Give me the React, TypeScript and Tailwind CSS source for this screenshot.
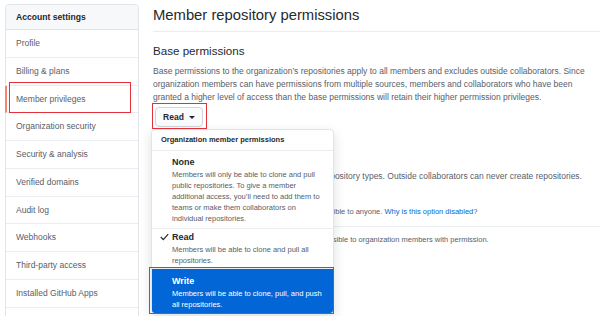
import React from "react";

const items = [
  "Profile",
  "Billing & plans",
  "Member privileges",
  "Organization security",
  "Security & analysis",
  "Verified domains",
  "Audit log",
  "Webhooks",
  "Third-party access",
  "Installed GitHub Apps",
  "",
];

export default function App() {
  const font = { fontFamily: '"Liberation Sans", Arial, sans-serif' };
  return (
    <div
      className="relative w-[600px] h-[316px] overflow-hidden bg-white flex text-[#24292e]"
      style={font}
    >
      {/* Sidebar */}
      <div className="ml-[5px] mt-[4px] w-[134px] shrink-0 self-start border border-[#e1e4e8] rounded-[4px] bg-white">
        <div className="h-[25px] flex items-center pl-[10px] text-[8.6px] font-bold bg-[#f6f8fa] border-b border-[#e1e4e8] rounded-t-[4px]">
          Account settings
        </div>
        {items.map((it, i) => (
          <div
            key={i}
            className={
              "h-[27.75px] flex items-center text-[8.5px] text-[#586069] border-b border-[#eaecef] " +
              (it === "Member privileges"
                ? "border-l-2 border-l-[#f9826c] -ml-px pl-[9px]"
                : "pl-[10px]")
            }
          >
            {it}
          </div>
        ))}
      </div>

      {/* Main */}
      <div className="ml-[14px] flex-1 pt-[5px]">
        <div className="text-[14.8px] leading-[20px] font-normal border-b border-[#eaecef] pb-[6px] whitespace-nowrap">
          Member repository permissions
        </div>
        <div className="text-[11.6px] leading-[16px] mt-[11px]">Base permissions</div>
        <p className="text-[8.5px] leading-[13px] text-[#586069] mt-[5.5px] whitespace-nowrap">
          Base permissions to the organization’s repositories apply to all members and excludes outside collaborators. Since
          <br />
          organization members can have permissions from multiple sources, members and collaborators who have been
          <br />
          granted a higher level of access than the base permissions will retain their higher permission privileges.
        </p>
        <div className="mt-[3.5px] flex">
          <div className="h-[20px] w-[48px] ml-[2px] flex items-center justify-center gap-[5px] text-[8.5px] font-bold bg-[#fafbfc] border border-[#d1d5da] rounded-[4px]">
            Read
            <span className="w-0 h-0 border-l-[3px] border-r-[3px] border-t-[3px] border-l-transparent border-r-transparent border-t-[#24292e]" />
          </div>
        </div>
        <div className="text-[11.6px] leading-[16px] mt-[20px]">Repository creation</div>
        <p className="text-[8.5px] leading-[13px] text-[#586069] mt-[6.5px] whitespace-nowrap">
          Members will be able to create only selected repository types. Outside collaborators can never create repositories.
        </p>
        <div className="mt-[23px] pl-[3px] text-[7.5px] text-[#586069] leading-[11px] whitespace-nowrap">
          Members will be able to create public repositories, visible to anyone.{" "}
          <span className="text-[#0366d6]">Why is this option disabled?</span>
        </div>
        <div className="mt-[9.5px] border-t border-[#eaecef]" />
        <div className="mt-[7px] pl-[3px] text-[7.5px] text-[#586069] leading-[11px] whitespace-nowrap">
          Members will be able to create private repositories, visible to organization members with permission.
        </div>
      </div>

      {/* Dropdown */}
      <div className="absolute left-[151px] top-[129px] w-[183px] h-[185px] bg-white border border-[#e1e4e8] rounded-[4px] shadow-[0_4px_12px_rgba(27,31,35,0.15)] overflow-hidden">
        <div className="h-[21px] flex items-center pl-[9px] text-[7.5px] font-bold border-b border-[#eaecef] whitespace-nowrap">
          Organization member permissions
        </div>
        <div className="pl-[20px] pr-[6px] pt-[5px] pb-[4px] border-b border-[#eaecef]">
          <div className="text-[9px] font-bold leading-[12px]">None</div>
          <div className="text-[7.5px] leading-[11px] text-[#586069] mt-[1px] whitespace-nowrap">
            Members will only be able to clone and pull
            <br />
            public repositories. To give a member
            <br />
            additional access, you’ll need to add them to
            <br />
            teams or make them collaborators on
            <br />
            individual repositories.
          </div>
        </div>
        <div className="relative pl-[20px] pr-[6px] pt-[2px] pb-[2px] border-b border-[#eaecef]">
          <svg className="absolute left-[8px] top-[4px]" width="9" height="8" viewBox="0 0 9 8">
            <path d="M0.8 4 L3.3 6.6 L8.2 1.2" fill="none" stroke="#24292e" strokeWidth="1.2" />
          </svg>
          <div className="text-[9px] font-bold leading-[12px]">Read</div>
          <div className="text-[7.5px] leading-[11px] text-[#586069] mt-[1px] whitespace-nowrap">
            Members will be able to clone and pull all
            <br />
            repositories.
          </div>
        </div>
        <div className="pl-[20px] pr-[6px] pt-[6px] pb-[3px] bg-[#0366d6] text-white">
          <div className="text-[9px] font-bold leading-[12px]">Write</div>
          <div className="text-[7.5px] leading-[11px] mt-[1px] whitespace-nowrap">
            Members will be able to clone, pull, and push
            <br />
            all repositories.
          </div>
        </div>
      </div>

      {/* Annotation boxes */}
      <div className="absolute left-[9px] top-[82px] w-[122px] h-[31px] border-[1.5px] border-[#e2313a]" />
      <div className="absolute left-[152px] top-[103px] w-[55px] h-[26px] border-[1.5px] border-[#e2313a]" />
      <div className="absolute left-[149px] top-[267px] w-[185px] h-[47px] border-[1.5px] border-[#e2313a]" />
    </div>
  );
}
